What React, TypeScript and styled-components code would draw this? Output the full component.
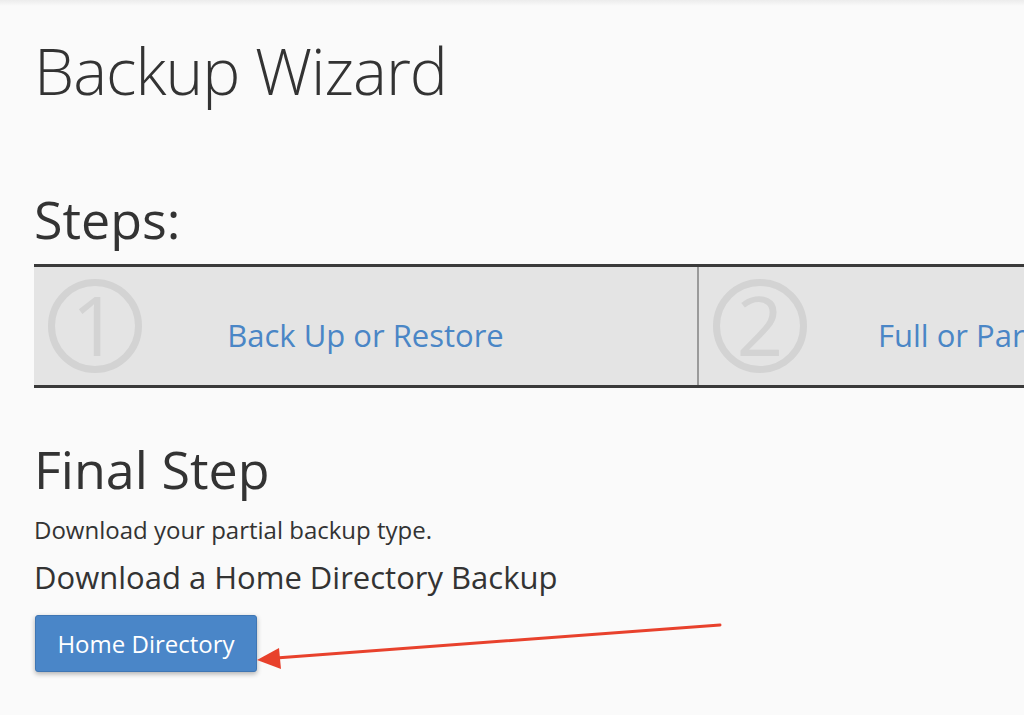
import styled, { createGlobalStyle } from 'styled-components';

const GlobalStyle = createGlobalStyle`
    html, body {
        margin: 0;
        padding: 0;
        background: #fafafa;
    }
    body {
        font-family: 'Open Sans', 'Liberation Sans', sans-serif;
        color: #333;
    }
`;

const PageStyled = styled.div`
    position: relative;
    width: 1024px;
    height: 715px;
    overflow: hidden;
    padding-left: 34px;
    box-sizing: border-box;
    background: linear-gradient(#ececec, #fafafa 6px);
`;

const Title = styled.h1`
    margin: 31px 0 0;
    font-size: 64px;
    line-height: 80px;
    font-weight: 300;
    letter-spacing: -1px;
    color: #333;
`;

const SectionTitle = styled.h2`
    margin: 78px 0 0;
    font-size: 52px;
    line-height: 60px;
    font-weight: 400;
    color: #333;
`;

const StepsBar = styled.div`
    margin-top: 15px;
    display: flex;
    width: 2000px;
    height: 118px;
    background: #e4e4e4;
    border-top: 3px solid #3a3a3a;
    border-bottom: 3px solid #3a3a3a;
`;

const StepCell = styled.div`
    flex: 0 0 663px;
    display: grid;
    grid-template-columns: 1fr auto 1fr;
    align-items: center;
    & + & {
        border-left: 2px solid #9a9a9a;
    }
`;

const StepNumber = styled.div`
    justify-self: start;
    margin-left: 14px;
    width: 80px;
    height: 80px;
    border: 7px solid #d3d3d3;
    border-radius: 50%;
    display: flex;
    align-items: center;
    justify-content: center;
    font-size: 82px;
    line-height: 1;
    font-weight: 400;
    color: #d3d3d3;
    span {
        margin-top: -4px;
    }
`;

const StepLink = styled.a`
    margin-top: 18px;
    font-size: 31px;
    line-height: 40px;
    color: #4a86c6;
    text-decoration: none;
    white-space: nowrap;
`;

const FinalTitle = styled.h2`
    margin: 49px 0 0;
    font-size: 52px;
    line-height: 64px;
    font-weight: 400;
    color: #333;
`;

const Description = styled.p`
    margin: 13px 0 0;
    font-size: 24px;
    line-height: 32px;
    color: #333;
`;

const SubTitle = styled.h3`
    margin: 11px 0 0;
    font-size: 31px;
    line-height: 40px;
    font-weight: 400;
    color: #333;
`;

const DownloadButton = styled.button`
    margin: 18px 0 0 1px;
    width: 222px;
    height: 57px;
    padding: 0;
    background: #4a86c8;
    border: 1px solid #3f76b3;
    border-radius: 3px;
    box-shadow: 0 2px 5px rgba(0, 0, 0, 0.3);
    color: #fff;
    font-family: inherit;
    font-size: 24px;
    cursor: pointer;
`;

const ArrowSvg = styled.svg`
    position: absolute;
    left: 250px;
    top: 615px;
`;

const steps = [
    { n: '1', label: 'Back Up or Restore' },
    { n: '2', label: 'Full or Partial Backup' },
    { n: '3', label: 'Download' },
];

export default function App() {
    return (
        <>
            <GlobalStyle />
            <PageStyled>
                <Title>Backup Wizard</Title>
                <SectionTitle>Steps:</SectionTitle>
                <StepsBar>
                    {steps.map((step) => (
                        <StepCell key={step.n}>
                            <StepNumber>
                                <span>{step.n}</span>
                            </StepNumber>
                            <StepLink href="#">{step.label}</StepLink>
                        </StepCell>
                    ))}
                </StepsBar>
                <FinalTitle>Final Step</FinalTitle>
                <Description>Download your partial backup type.</Description>
                <SubTitle>Download a Home Directory Backup</SubTitle>
                <DownloadButton>Home Directory</DownloadButton>
                <ArrowSvg width="480" height="60" viewBox="0 0 480 60">
                    <line x1="470" y1="10" x2="26" y2="43" stroke="#e8412c" strokeWidth="3" strokeLinecap="round" />
                    <polygon points="7,45 29,33 31,54" fill="#e8412c" />
                </ArrowSvg>
            </PageStyled>
        </>
    );
}
